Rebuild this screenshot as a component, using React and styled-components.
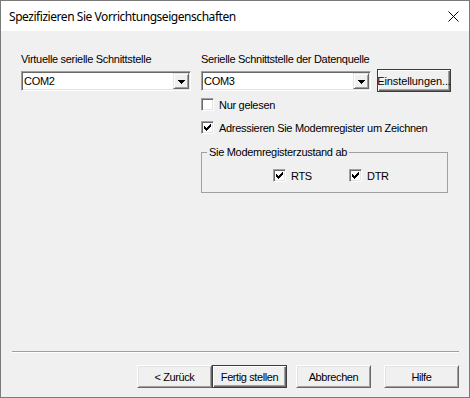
import React from "react";
import styled, { createGlobalStyle } from "styled-components";

const Global = createGlobalStyle`
  html, body { margin: 0; padding: 0; background: #ffffff; }
  body { font-family: "Liberation Sans", Arial, sans-serif; font-size: 11px; color: #000; letter-spacing: -0.3px; }
`;

const Window = styled.div`
  width: 470px;
  height: 398px;
  box-sizing: border-box;
  border: 1px solid #7a7a7a;
  display: flex;
  flex-direction: column;
  background: #f0f0f0;
`;

const TitleBar = styled.div`
  height: 30px;
  flex: none;
  background: #ffffff;
  display: flex;
  align-items: center;
  justify-content: space-between;
  padding: 0 10px 0 8px;
`;

const Title = styled.span`
  font-family: "Noto Sans", "Liberation Sans", sans-serif;
  font-size: 12px;
  color: #000;
  letter-spacing: -0.45px;
`;

const CloseIcon = styled.svg`
  width: 11px;
  height: 11px;
  display: block;
`;

const Body = styled.div`
  flex: 1;
  display: flex;
  flex-direction: column;
  padding: 22px 10px 9px 11px;
`;

const Columns = styled.div`
  display: flex;
  gap: 10px;
  padding-left: 9px;
`;

const Column = styled.div`
  display: flex;
  flex-direction: column;
  width: ${(p) => p.$w}px;
`;

const Label = styled.div`
  line-height: 13px;
  height: 13px;
  margin-bottom: 5px;
  white-space: nowrap;
`;

const ComboRow = styled.div`
  display: flex;
  align-items: center;
  gap: 6px;
  height: 20px;
`;

const Combo = styled.div`
  width: 170px;
  height: 20px;
  box-sizing: border-box;
  background: #ffffff;
  border: 1px solid;
  border-color: #a0a0a0 #ffffff #ffffff #a0a0a0;
  box-shadow: inset 1px 1px 0 #696969, inset -1px -1px 0 #e3e3e3;
  display: flex;
  align-items: stretch;
  padding: 1px;
`;

const ComboText = styled.div`
  flex: 1;
  line-height: 16px;
  padding-left: 1px;
`;

const DropButton = styled.div`
  width: 16px;
  box-sizing: border-box;
  background: #f0f0f0;
  border: 1px solid;
  border-color: #e3e3e3 #696969 #696969 #e3e3e3;
  box-shadow: inset 1px 1px 0 #ffffff, inset -1px -1px 0 #a0a0a0;
  display: flex;
  align-items: center;
  justify-content: center;
`;

const Arrow = styled.svg`
  width: 7px;
  height: 4px;
  display: block;
  margin-top: 1px;
`;

const PushButton = styled.div`
  width: ${(p) => p.$w || 75}px;
  height: 23px;
  box-sizing: border-box;
  background: #f0f0f0;
  border: 1px solid;
  border-color: ${(p) => (p.$default ? "#3c3c3c" : "#ffffff #696969 #696969 #ffffff")};
  box-shadow: ${(p) =>
    p.$default
      ? "inset 1px 1px 0 #ffffff, inset -1px -1px 0 #696969, inset -2px -2px 0 #a0a0a0"
      : "inset 1px 1px 0 #e3e3e3, inset -1px -1px 0 #a0a0a0"};
  display: flex;
  align-items: center;
  justify-content: center;
  overflow: hidden;
  white-space: nowrap;
  letter-spacing: -0.4px;
  flex: none;
`;

const Settings = styled(PushButton)`
  margin-top: -1px;
  letter-spacing: -0.1px;
`;

const ChecksArea = styled.div`
  display: flex;
  flex-direction: column;
  gap: 10px;
  margin-top: 7px;
`;

const CheckItem = styled.div`
  display: flex;
  align-items: center;
  gap: 5px;
  height: 13px;
  white-space: nowrap;
  width: ${(p) => (p.$w ? p.$w + "px" : "auto")};
`;

const Box = styled.div`
  width: 13px;
  height: 13px;
  box-sizing: border-box;
  background: #ffffff;
  border: 1px solid;
  border-color: #a0a0a0 #ffffff #ffffff #a0a0a0;
  box-shadow: inset 1px 1px 0 #696969, inset -1px -1px 0 #e3e3e3;
  padding: 2px;
  flex: none;
`;

const Tick = styled.svg`
  width: 7px;
  height: 7px;
  display: block;
`;

const Group = styled.fieldset`
  margin: 12px 0 0 0;
  padding: 0;
  width: 247px;
  box-sizing: border-box;
  border: 1px solid #a0a0a0;
  min-inline-size: 0;
`;

const Legend = styled.legend`
  padding: 0 2px;
  margin-left: 5px;
  line-height: 13px;
  white-space: nowrap;
`;

const GroupRow = styled.div`
  display: flex;
  padding: 10px 0 10px 71px;
`;

const Separator = styled.div`
  margin-top: auto;
  height: 1px;
  background: #a0a0a0;
  border-bottom: 1px solid #ffffff;
  width: 447px;
`;

const ButtonRow = styled.div`
  display: flex;
  justify-content: flex-end;
  margin-top: 12px;
`;

const Spacer = styled.div`
  width: ${(p) => p.$w}px;
  flex: none;
`;

const Check = ({ checked, children, w }) => (
  <CheckItem $w={w}>
    <Box>
      {checked && (
        <Tick viewBox="0 0 7 7" shapeRendering="crispEdges">
          <path
            d="M0 2H1V3H2V4H3V3H4V2H5V1H6V0H7V3H6V4H5V5H4V6H3V7H2V6H1V5H0Z"
            fill="#000"
          />
        </Tick>
      )}
    </Box>
    <span>{children}</span>
  </CheckItem>
);

const ComboBox = ({ value }) => (
  <Combo>
    <ComboText>{value}</ComboText>
    <DropButton>
      <Arrow viewBox="0 0 7 4" shapeRendering="crispEdges">
        <path d="M0 0H7L3.5 4Z" fill="#000" />
      </Arrow>
    </DropButton>
  </Combo>
);

export default function App() {
  return (
    <>
      <Global />
      <Window>
        <TitleBar>
          <Title>Spezifizieren Sie Vorrichtungseigenschaften</Title>
          <CloseIcon viewBox="0 0 11 11">
            <path d="M0.5 0.5L10.5 10.5M10.5 0.5L0.5 10.5" stroke="#000" strokeWidth="1" />
          </CloseIcon>
        </TitleBar>
        <Body>
          <Columns>
            <Column $w={170}>
              <Label>Virtuelle serielle Schnittstelle</Label>
              <ComboBox value="COM2" />
            </Column>
            <Column $w={250}>
              <Label>Serielle Schnittstelle der Datenquelle</Label>
              <ComboRow>
                <ComboBox value="COM3" />
                <Settings $default $w={74}>Einstellungen...</Settings>
              </ComboRow>
              <ChecksArea>
                <Check>Nur gelesen</Check>
                <Check checked>Adressieren Sie Modemregister um Zeichnen</Check>
              </ChecksArea>
              <Group>
                <Legend>Sie Modemregisterzustand ab</Legend>
                <GroupRow>
                  <Check checked w={76}>RTS</Check>
                  <Check checked>DTR</Check>
                </GroupRow>
              </Group>
            </Column>
          </Columns>
          <Separator />
          <ButtonRow>
            <PushButton>&lt; Zurück</PushButton>
            <PushButton $default>Fertig stellen</PushButton>
            <Spacer $w={9} />
            <PushButton>Abbrechen</PushButton>
            <Spacer $w={13} />
            <PushButton>Hilfe</PushButton>
          </ButtonRow>
        </Body>
      </Window>
    </>
  );
}
